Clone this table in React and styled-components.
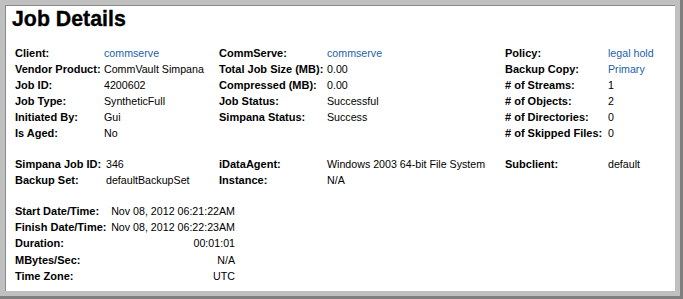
import React from "react";
import styled, { createGlobalStyle } from "styled-components";

const GlobalStyle = createGlobalStyle`
  html, body {
    margin: 0;
    padding: 0;
    background: #ffffff;
  }
  body {
    font-family: "Liberation Sans", Arial, sans-serif;
    color: #000;
  }
`;

const Frame = styled.div`
  width: 683px;
  height: 299px;
  box-sizing: border-box;
  border-right: 3px solid #7f7f7f;
  border-bottom: 3px solid #7f7f7f;
`;

const Panel = styled.div`
  height: 100%;
  box-sizing: border-box;
  border: 5px solid #c0c0c0;
  background: #fff;
  box-shadow: inset 1px 1px 0 #8a8a8a;
`;

const Title = styled.h1`
  margin: 2px 0 0 0;
  padding-left: 7px;
  height: 24px;
  line-height: 24px;
  font-size: 21.33px;
  font-weight: bold;
  -webkit-text-stroke: 0.35px #000;
  color: #000;
`;

const Body = styled.div`
  padding: 14px 0 0 10px;
  display: flex;
  flex-direction: column;
`;

const Section = styled.div`
  display: grid;
  grid-template-columns: 204px 286px 1fr;
  margin-top: ${(p) => p.$gap || 0}px;
`;

const Group = styled.div`
  display: grid;
  grid-template-columns: ${(p) => p.$label}px ${(p) => (p.$value ? `${p.$value}px` : "1fr")};
  grid-auto-rows: ${(p) => p.$row || 16}px;
  align-items: center;
`;

const Label = styled.div`
  font-size: 11px;
  font-weight: bold;
  white-space: nowrap;
  line-height: 16px;
`;

const Value = styled.div`
  font-size: 10.67px;
  white-space: nowrap;
  line-height: 16px;
  text-align: ${(p) => (p.$right ? "right" : "left")};
  color: ${(p) => (p.$link ? "#1d5fa9" : "#000")};
`;

const Field = ({ label, value, link, right }) => (
  <>
    <Label>{label}</Label>
    <Value $link={link} $right={right}>
      {value}
    </Value>
  </>
);

export default function App() {
  return (
    <>
      <GlobalStyle />
      <Frame>
        <Panel>
          <Title>Job Details</Title>
          <Body>
            <Section>
              <Group $label={89}>
                <Field label="Client:" value="commserve" link />
                <Field label="Vendor Product:" value="CommVault Simpana" />
                <Field label="Job ID:" value="4200602" />
                <Field label="Job Type:" value="SyntheticFull" />
                <Field label="Initiated By:" value="Gui" />
                <Field label="Is Aged:" value="No" />
              </Group>
              <Group $label={108}>
                <Field label="CommServe:" value="commserve" link />
                <Field label="Total Job Size (MB):" value="0.00" />
                <Field label="Compressed (MB):" value="0.00" />
                <Field label="Job Status:" value="Successful" />
                <Field label="Simpana Status:" value="Success" />
              </Group>
              <Group $label={103}>
                <Field label="Policy:" value="legal hold" link />
                <Field label="Backup Copy:" value="Primary" link />
                <Field label="# of Streams:" value="1" />
                <Field label="# of Objects:" value="2" />
                <Field label="# of Directories:" value="0" />
                <Field label="# of Skipped Files:" value="0" />
              </Group>
            </Section>

            <Section $gap={14.5}>
              <Group $label={91} $row={16.5}>
                <Field label="Simpana Job ID:" value="346" />
                <Field label="Backup Set:" value="defaultBackupSet" />
              </Group>
              <Group $label={108} $row={16.5}>
                <Field label="iDataAgent:" value="Windows 2003 64-bit File System" />
                <Field label="Instance:" value="N/A" />
              </Group>
              <Group $label={103} $row={16.5}>
                <Field label="Subclient:" value="default" />
              </Group>
            </Section>

            <Section $gap={14}>
              <Group $label={93} $value={127} $row={16.3}>
                <Field label="Start Date/Time:" value="Nov 08, 2012 06:21:22AM" right />
                <Field label="Finish Date/Time:" value="Nov 08, 2012 06:22:23AM" right />
                <Field label="Duration:" value="00:01:01" right />
                <Field label="MBytes/Sec:" value="N/A" right />
                <Field label="Time Zone:" value="UTC" right />
              </Group>
            </Section>
          </Body>
        </Panel>
      </Frame>
    </>
  );
}
